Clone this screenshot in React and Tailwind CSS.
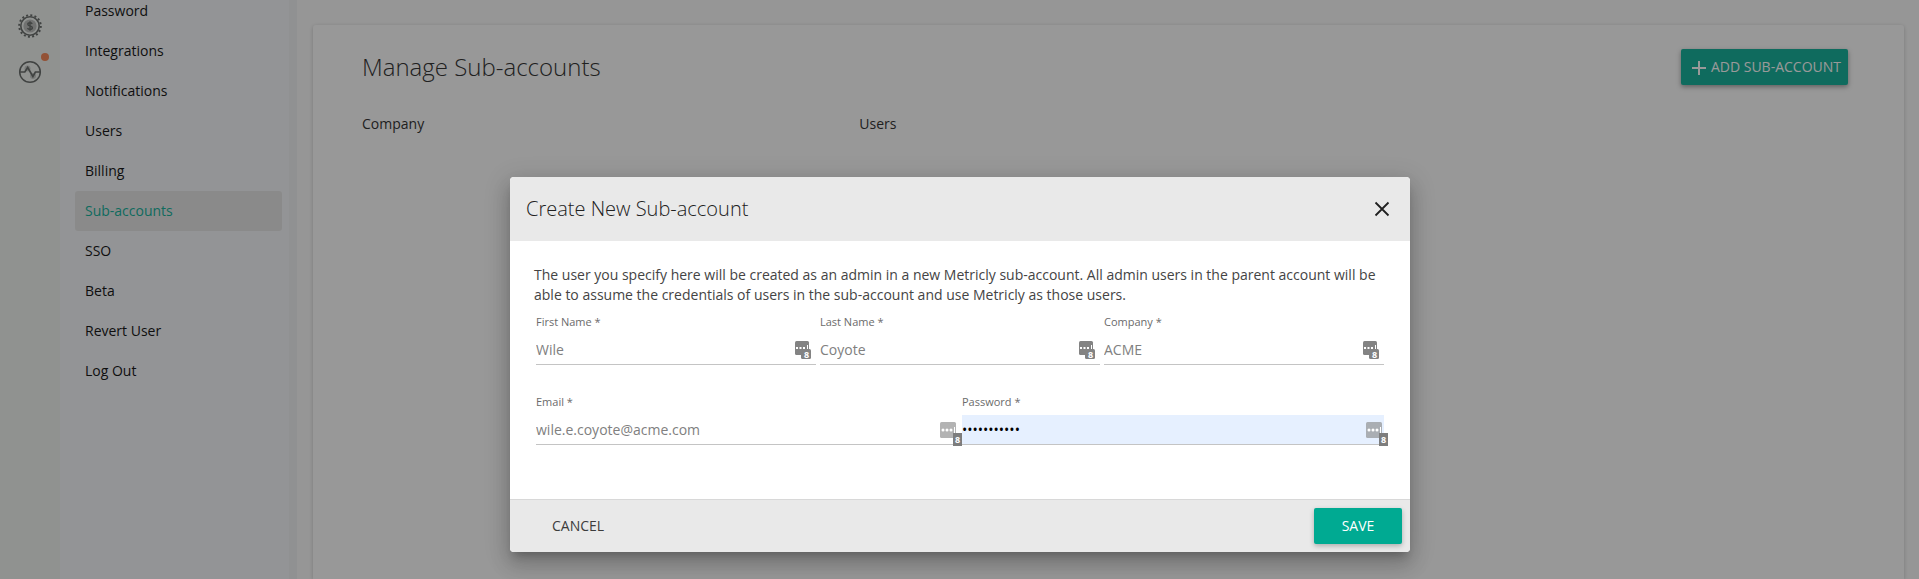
import React from "react";

const navItems = [
  "Password",
  "Integrations",
  "Notifications",
  "Users",
  "Billing",
  "Sub-accounts",
  "SSO",
  "Beta",
  "Revert User",
  "Log Out",
];

function GearDollarIcon() {
  return (
    <svg viewBox="0 0 24 24" className="size-6" aria-hidden="true">
      <circle cx="12" cy="12" r="10.8" fill="none" stroke="#5c605e" strokeWidth="2" strokeDasharray="2 2.241" />
      <circle cx="12" cy="12" r="9.2" fill="none" stroke="#5c605e" strokeWidth="1.6" />
      <circle cx="12" cy="12" r="6.6" fill="#b5b8b6" />
      <path
        d="M14.2 9.8c-.4-.7-1.2-1.1-2.2-1.1-1.3 0-2.2.6-2.2 1.6 0 2.2 4.6 1.1 4.6 3.4 0 1-1 1.7-2.4 1.7-1.2 0-2.1-.5-2.5-1.3M12 7.3v9.4"
        fill="none"
        stroke="#5c605e"
        strokeWidth="1.4"
      />
    </svg>
  );
}

function PulseIcon() {
  return (
    <svg viewBox="0 0 24 24" className="size-6" aria-hidden="true">
      <circle cx="9.5" cy="8.5" r="3" fill="#c3c6c4" />
      <circle cx="15" cy="16" r="3" fill="#c3c6c4" />
      <circle cx="12" cy="12" r="10.3" fill="none" stroke="#5c605e" strokeWidth="1.5" />
      <path d="M2 12h4.8L9.7 7.500l5.200 9 2.500-4.500H22" fill="none" stroke="#5c605e" strokeWidth="1.7" />
    </svg>
  );
}

function CompactKeyIcon() {
  return (
    <svg viewBox="0 0 16 18" className="absolute top-1.5 right-[5px] h-[18px] w-4" aria-hidden="true">
      <rect width="14" height="14" rx="1.5" fill="#838383" />
      <rect x="6" y="8" width="10" height="10" rx="1.5" fill="#838383" />
      <path d="M1 6h2v2H1zM4.500 6h2v2h-2zM8 6h2v2H8zM12 4h1v4h-1z" fill="#fff" />
      <text x="11.5" y="16.5" textAnchor="middle" fontSize="9" fontWeight="700" fill="#fff">
        8
      </text>
    </svg>
  );
}

function WideKeyIcon() {
  return (
    <svg viewBox="0 0 22 24" className="absolute top-[7px] -right-1 h-6 w-[22px]" aria-hidden="true">
      <rect width="16" height="16" rx="1.5" fill="#8a8a8a" fillOpacity="0.65" />
      <circle cx="3" cy="8" r="1.5" fill="#fff" />
      <circle cx="7" cy="8" r="1.5" fill="#fff" />
      <circle cx="11" cy="8" r="1.5" fill="#fff" />
      <path d="M14 5h1v6h-1z" fill="#fff" />
      <rect x="13" y="11" width="9" height="13" fill="#7d7d7d" />
      <text x="17.5" y="20.5" textAnchor="middle" fontSize="9" fontWeight="700" fill="#fff">
        8
      </text>
    </svg>
  );
}

function Field({ id, label, value, type = "text", wide = false, filled = false }) {
  return (
    <div className="min-w-0 flex-1">
      <label htmlFor={id} className="block text-[11px] leading-5 text-[#6b6b6b]">
        {label} *
      </label>
      <div className="relative mt-[3px]">
        <input
          id={id}
          type={type}
          defaultValue={value}
          className={
            "block h-[30px] w-full rounded-none border-b border-[#c4c4c4] text-sm outline-none " +
            (filled ? "bg-[#e6f0ff] text-black" : "bg-transparent text-[#808080]")
          }
        />
        {wide ? <WideKeyIcon /> : <CompactKeyIcon />}
      </div>
    </div>
  );
}

function Dialog() {
  return (
    <div
      role="dialog"
      aria-modal="true"
      aria-labelledby="dialog-title"
      className="w-full max-w-[900px] overflow-hidden rounded-[4px] bg-white text-[#212121] shadow-[0_7px_8px_-4px_rgba(0,0,0,0.2),0_13px_19px_2px_rgba(0,0,0,0.14),0_5px_24px_4px_rgba(0,0,0,0.12)]"
    >
      <header className="flex h-16 items-center justify-between bg-[#e9e9e9] px-4">
        <h2 id="dialog-title" className="text-xl font-light">
          Create New Sub-account
        </h2>
        <button type="button" aria-label="Close" className="flex size-6 items-center justify-center">
          <svg viewBox="0 0 24 24" className="size-6" aria-hidden="true">
            <path d="M5.500 5.500l13 13M18.500 5.500l-13 13" stroke="#212121" strokeWidth="1.8" fill="none" />
          </svg>
        </button>
      </header>
      <form>
        <div className="px-6 pt-6 pb-[54px]">
          <p className="text-sm leading-5 text-[#444444]">
            The user you specify here will be created as an admin in a new Metricly sub-account. All admin users in the
            parent account will be able to assume the credentials of users in the sub-account and use Metricly as those
            users.
          </p>
          <div className="mt-[7px] flex gap-1 px-0.5">
            <Field id="first-name" label="First Name" value="Wile" />
            <Field id="last-name" label="Last Name" value="Coyote" />
            <Field id="company" label="Company" value="ACME" />
          </div>
          <div className="mt-[27px] flex gap-1 px-0.5">
            <Field id="email" label="Email" type="email" value="wile.e.coyote@acme.com" wide />
            <Field id="password" label="Password" type="password" value="roadrunner1" wide filled />
          </div>
        </div>
        <footer className="flex items-center justify-between border-t border-[#d8d8d8] bg-[#e9e9e9] p-2">
          <button type="button" className="h-9 px-[34px] text-sm text-[#3c3c3c]">
            CANCEL
          </button>
          <button
            type="button"
            className="h-9 w-[88px] rounded-[2px] bg-[#00aa92] text-sm font-medium text-white shadow-[0_2px_5px_rgba(0,0,0,0.26)]"
          >
            SAVE
          </button>
        </footer>
      </form>
    </div>
  );
}

export default function App() {
  return (
    <div className="relative h-screen overflow-hidden bg-[#fafafa] font-['Open_Sans',sans-serif] text-[#212121]">
      <div className="flex h-full">
        <aside className="flex w-[60px] shrink-0 flex-col items-center gap-[22px] bg-[#eef2ef] pt-3.5">
          <a href="#billing" aria-label="Cost">
            <GearDollarIcon />
          </a>
          <a href="#activity" aria-label="Activity" className="relative">
            <PulseIcon />
            <span className="absolute -top-[7px] -right-[7px] size-2 rounded-full bg-[#f47c48]" />
          </a>
        </aside>
        <nav className="w-[237px] shrink-0 border-r-8 border-[#eff0f3] bg-[#f4f6fa] pr-[7px] pl-[15px]">
          <ul className="-mt-[9px]">
            {navItems.map((item) => {
              const active = item === "Sub-accounts";
              return (
                <li key={item}>
                  <a
                    href="#settings"
                    className={
                      "flex h-10 items-center rounded-[3px] px-2.5 text-sm font-medium " +
                      (active ? "bg-[#e4e4e4] text-[#00aa92]" : "text-black")
                    }
                  >
                    {item}
                  </a>
                </li>
              );
            })}
          </ul>
        </nav>
        <main className="flex-1 pt-[25px] pr-[15px] pl-4">
          <section className="h-full rounded-t-[3px] bg-[#fdfdfd] pt-6 pr-[50px] pl-[49px] shadow-[0_1px_4px_rgba(0,0,0,0.22)]">
            <div className="flex items-center justify-between">
              <h1 className="text-2xl leading-9 font-light">Manage Sub-accounts</h1>
              <button
                type="button"
                className="mr-1.5 flex h-9 items-center gap-1 rounded-[2px] bg-[#00aa92] pr-[7px] pl-2.5 text-sm text-white shadow-[0_2px_5px_rgba(0,0,0,0.4)]"
              >
                <svg viewBox="0 0 16 16" className="size-4" aria-hidden="true">
                  <path d="M8 2v14M1 9h14" stroke="currentColor" strokeWidth="2" fill="none" />
                </svg>
                ADD SUB-ACCOUNT
              </button>
            </div>
            <table className="mt-[29px] w-full table-fixed text-left text-sm">
              <thead>
                <tr>
                  <th className="w-1/3 font-medium">Company</th>
                  <th className="font-medium">Users</th>
                </tr>
              </thead>
            </table>
          </section>
        </main>
      </div>
      <div className="absolute inset-0 flex items-start justify-center bg-[rgba(33,33,33,0.46)] pt-[177px] pl-px">
        <Dialog />
      </div>
    </div>
  );
}
